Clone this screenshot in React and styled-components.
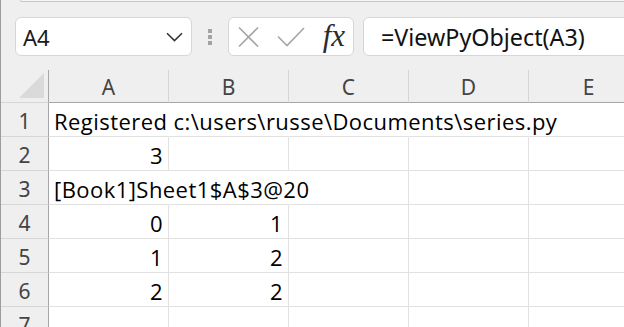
import React from "react";
import styled, { createGlobalStyle } from "styled-components";

const GlobalStyle = createGlobalStyle`
  html, body {
    margin: 0;
    padding: 0;
    background: #efefef;
    overflow: hidden;
  }
`;

const Frame = styled.div`
  width: 624px;
  height: 327px;
  box-sizing: border-box;
  border-left: 1px solid #9c9c9c;
  background: #efefef;
  overflow: hidden;
  font-family: "Noto Sans", "Open Sans", sans-serif;
`;

const TopEdge = styled.div`
  height: 1px;
  margin-left: 19px;
  border: 1px solid #c8c8c8;
  border-top: none;
  border-right: none;
  border-bottom-left-radius: 6px;
  background: #f4f4f4;
`;

const Toolbar = styled.div`
  display: flex;
  align-items: center;
  height: 39px;
  margin: 15px 0 14px 14px;
`;

const Box = styled.div`
  box-sizing: border-box;
  height: 39px;
  background: #fff;
  border: 1px solid #d6d6d6;
  border-radius: 6px;
  display: flex;
  align-items: center;
`;

const NameBox = styled(Box)`
  width: 177px;
  padding: 0 8px 0 7px;
  justify-content: space-between;
  font-size: 22px;
  color: #1a1a1a;
`;

const Grip = styled.div`
  display: flex;
  flex-direction: column;
  gap: 2px;
  margin: 0 16px 0 16px;
`;

const GripDot = styled.span`
  width: 4px;
  height: 4px;
  background: #a3a3a3;
`;

const FxBox = styled(Box)`
  width: 126px;
  padding: 0 8px 0 8px;
  justify-content: space-between;
`;

const Fx = styled.span`
  font-family: "Liberation Serif", "DejaVu Serif", serif;
  font-style: italic;
  font-size: 31px;
  color: #2b2b2b;
  margin-top: -2px;
`;

const FormulaBox = styled(Box)`
  flex: 1;
  margin-left: 9px;
  margin-right: -8px;
  padding-left: 17px;
  font-size: 23.3px;
  color: #111;
`;

const Sheet = styled.div`
  display: grid;
  grid-template-columns: 48px repeat(5, 120px);
  grid-auto-rows: 34px;
  grid-template-rows: 33px;
`;

const Corner = styled.div`
  position: relative;
  box-sizing: border-box;
  border-right: 1px solid #a6a6a6;
  border-bottom: 1px solid #d6d6d6;
`;

const CornerTriangle = styled.div`
  position: absolute;
  right: 4px;
  bottom: 4px;
  width: 0;
  height: 0;
  border-left: 25px solid transparent;
  border-bottom: 25px solid #dadada;
`;

const ColHead = styled.div`
  box-sizing: border-box;
  display: flex;
  align-items: center;
  justify-content: center;
  border-right: 1px solid #d6d6d6;
  border-bottom: 1px solid #a6a6a6;
  font-size: 21px;
  color: #444;
  padding-top: 2px;
`;

const RowHead = styled.div`
  box-sizing: border-box;
  display: flex;
  align-items: center;
  justify-content: center;
  border-right: 1px solid #a6a6a6;
  border-bottom: 1px solid #d6d6d6;
  font-size: 21px;
  color: #444;
  padding-top: 2px;
`;

const Cell = styled.div`
  box-sizing: border-box;
  background: #fff;
  border-right: 1px solid ${(p) => (p.$spill ? "#fff" : "#e1e1e1")};
  border-bottom: 1px solid #e1e1e1;
  display: flex;
  align-items: center;
  justify-content: ${(p) => (p.$num ? "flex-end" : "flex-start")};
  padding: 2px 5px 0 5px;
  font-family: "Open Sans", "Noto Sans", sans-serif;
  font-size: 22px;
  letter-spacing: 0.45px;
  color: #000;
  white-space: nowrap;
  position: relative;
  z-index: ${(p) => (p.$source ? 2 : 0)};
`;

const Chevron = () => (
  <svg width="17" height="10" viewBox="0 0 17 10">
    <path d="M1 1.2 L8.5 8.6 L16 1.2" fill="none" stroke="#333" strokeWidth="1.5" />
  </svg>
);

const CrossIcon = () => (
  <svg width="23" height="22" viewBox="0 0 23 22">
    <path d="M2 1.5 L21 20.5 M21 1.5 L2 20.5" stroke="#a6a6a6" strokeWidth="1.6" fill="none" />
  </svg>
);

const CheckIcon = () => (
  <svg width="30" height="22" viewBox="0 0 30 22">
    <path d="M2 10.5 L11 19.5 L28 2" stroke="#a6a6a6" strokeWidth="1.6" fill="none" />
  </svg>
);

const columns = ["A", "B", "C", "D", "E"];

const rows = [
  { n: 1, cells: [{ v: "Registered c:\\users\\russe\\Documents\\series.py", spill: 5 }] },
  { n: 2, cells: [{ v: "3", num: true }] },
  { n: 3, cells: [{ v: "[Book1]Sheet1$A$3@20", spill: 3 }] },
  { n: 4, cells: [{ v: "0", num: true }, { v: "1", num: true }] },
  { n: 5, cells: [{ v: "1", num: true }, { v: "2", num: true }] },
  { n: 6, cells: [{ v: "2", num: true }, { v: "2", num: true }] },
  { n: 7, cells: [] },
];

function renderRow(row) {
  const out = [<RowHead key={"h" + row.n}>{row.n}</RowHead>];
  const first = row.cells[0];
  const spill = first && first.spill ? first.spill : 0;
  for (let i = 0; i < columns.length; i++) {
    const c = row.cells[i];
    const key = row.n + "-" + i;
    // text that overflows its cell hides the grid lines it crosses
    const covered = i < spill - 1;
    if (i === 0 && spill) {
      out.push(
        <Cell key={key} $source $spill={covered}>
          {first.v}
        </Cell>
      );
    } else if (i < spill) {
      out.push(<Cell key={key} $spill={covered} />);
    } else {
      out.push(
        <Cell key={key} $num={c && c.num}>
          {c ? c.v : ""}
        </Cell>
      );
    }
  }
  return out;
}

export default function App() {
  return (
    <>
      <GlobalStyle />
      <Frame>
        <TopEdge />
        <Toolbar>
          <NameBox>
            <span>A4</span>
            <Chevron />
          </NameBox>
          <Grip>
            <GripDot />
            <GripDot />
            <GripDot />
          </Grip>
          <FxBox>
            <CrossIcon />
            <CheckIcon />
            <Fx>fx</Fx>
          </FxBox>
          <FormulaBox>=ViewPyObject(A3)</FormulaBox>
        </Toolbar>
        <Sheet>
          <Corner>
            <CornerTriangle />
          </Corner>
          {columns.map((c) => (
            <ColHead key={c}>{c}</ColHead>
          ))}
          {rows.map(renderRow)}
        </Sheet>
      </Frame>
    </>
  );
}
